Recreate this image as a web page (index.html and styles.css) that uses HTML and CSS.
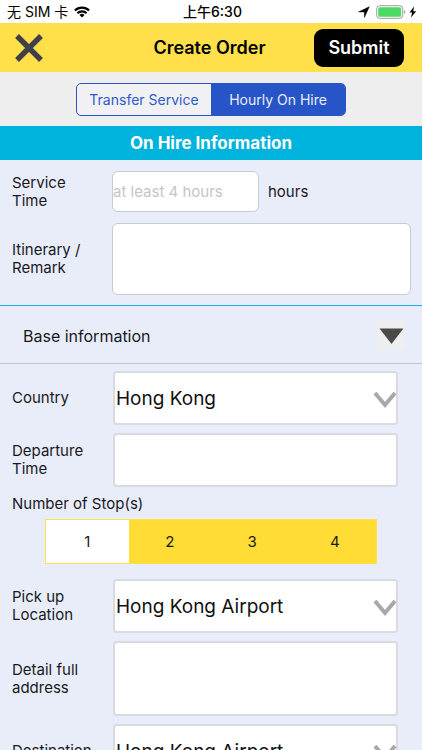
FILE: index.html
```html
<!DOCTYPE html>
<html lang="en">
<head>
<meta charset="utf-8">
<meta name="viewport" content="width=device-width, initial-scale=1">
<title>Create Order</title>
<link rel="stylesheet" href="styles.css">
</head>
<body>
<form class="app">
  <div class="status">
    <div class="status-side">
      <span>无 SIM 卡</span>
      <svg width="16" height="12" viewBox="0 0 16 12" aria-hidden="true">
        <g fill="none" stroke="#000" stroke-width="2.200">
          <path d="M.9 4.6a10 10 0 0 1 14.2 0"/>
          <path d="M3.4 7.2a6.5 6.5 0 0 1 9.2 0"/>
        </g>
        <path d="M8 11.6 5.5 9.1a3.5 3.5 0 0 1 5 0z"/>
      </svg>
    </div>
    <span class="clock">上午6:30</span>
    <div class="status-side status-right">
      <svg width="12" height="12" viewBox="0 0 12 12" aria-hidden="true"><path d="M11.3.7 6.400 11.400V5.900H.600z" stroke="#000" stroke-width=".500"/></svg>
      <svg width="42" height="14" viewBox="0 0 42 14" aria-hidden="true">
        <rect x=".7" y=".7" width="26" height="12.6" rx="3" fill="#fff" stroke="#9a9a9a"/>
        <rect x="2.2" y="2.2" width="23" height="9.6" rx="1.5" fill="#4cd964"/>
        <path d="M28 5v4q1.300-.5 1.300-2T28 5z" fill="#9a9a9a"/>
        <path d="M38 1.500 33.500 7.600h2.600L35 12.500l5.200-6.300h-2.900z"/>
      </svg>
    </div>
  </div>

  <header class="header">
    <button class="close" type="button" aria-label="Close">
      <svg width="28" height="28" viewBox="0 0 28 28" aria-hidden="true"><path d="M2 2 26 26M26 2 2 26" stroke="#413f4a" stroke-width="5.400"/></svg>
    </button>
    <h1 class="title">Create Order</h1>
    <button class="submit" type="submit">Submit</button>
  </header>

  <nav class="tabs">
    <div class="segment">
      <button class="tab" type="button">Transfer Service</button>
      <button class="tab active" type="button">Hourly On Hire</button>
    </div>
  </nav>

  <main class="content">
    <h2 class="banner">On Hire Information</h2>
    <section class="hire">
      <div class="row">
        <label class="label" for="hours">Service Time</label>
        <input class="box hours" id="hours" type="text" placeholder="at least 4 hours">
        <span class="unit">hours</span>
      </div>
      <div class="row">
        <label class="label" for="remark">Itinerary / Remark</label>
        <textarea class="box remark" id="remark"></textarea>
      </div>
    </section>

    <button class="collapse" type="button">
      <span>Base information</span>
      <svg width="28" height="28" viewBox="0 0 28 28" aria-hidden="true"><path fill="#eee" d="M0 0h28v28H0z"/><path d="M2.500 7.500h24L14.500 23z" fill="#4a4a4a"/></svg>
    </button>

    <section class="base">
      <div class="row">
        <label class="label" for="country">Country</label>
        <div class="picker">
          <select class="field" id="country"><option>Hong Kong</option></select>
          <svg class="chevron" width="24" height="18" viewBox="0 0 24 18" aria-hidden="true"><path d="M2 2 12 14 22 2" fill="none" stroke="#a8a8a8" stroke-width="4"/></svg>
        </div>
      </div>
      <div class="row">
        <label class="label" for="departure">Departure Time</label>
        <input class="field" id="departure" type="text">
      </div>
      <fieldset class="stops">
        <legend class="legend">Number of Stop(s)</legend>
        <div class="options">
          <label class="option"><input type="radio" name="stops" checked><span>1</span></label>
          <label class="option"><input type="radio" name="stops"><span>2</span></label>
          <label class="option"><input type="radio" name="stops"><span>3</span></label>
          <label class="option"><input type="radio" name="stops"><span>4</span></label>
        </div>
      </fieldset>
      <div class="row">
        <label class="label" for="pickup">Pick up Location</label>
        <div class="picker">
          <select class="field" id="pickup"><option>Hong Kong Airport</option></select>
          <svg class="chevron" width="24" height="18" viewBox="0 0 24 18" aria-hidden="true"><path d="M2 2 12 14 22 2" fill="none" stroke="#a8a8a8" stroke-width="4"/></svg>
        </div>
      </div>
      <div class="row">
        <label class="label" for="address">Detail full address</label>
        <textarea class="field tall" id="address"></textarea>
      </div>
      <div class="row">
        <label class="label" for="destination">Destination</label>
        <div class="picker">
          <select class="field" id="destination"><option>Hong Kong Airport</option></select>
          <svg class="chevron" width="24" height="18" viewBox="0 0 24 18" aria-hidden="true"><path d="M2 2 12 14 22 2" fill="none" stroke="#a8a8a8" stroke-width="4"/></svg>
        </div>
      </div>
    </section>
  </main>
</form>
</body>
</html>
```

FILE: styles.css
```css
* { box-sizing: border-box; }

body {
  margin: 0;
  font-family: Inter, "Noto Sans CJK SC", sans-serif;
  font-size: 15px;
  color: #18191f;
}

button, input, select, textarea {
  margin: 0;
  font: inherit;
  color: inherit;
}

button { border: 0; padding: 0; background: none; }
svg { display: block; flex: none; }

.app {
  display: flex;
  flex-direction: column;
  height: 100vh;
  overflow: hidden;
  background: #e9edf9;
}

.status {
  display: grid;
  grid-template-columns: 1fr auto 1fr;
  align-items: center;
  flex: none;
  height: 23px;
  padding: 0 4px 0 7px;
  background: #fff;
  font-size: 14px;
  line-height: 23px;
  color: #000;
}

.status-side { display: flex; align-items: center; gap: 6px; }
.status-right { justify-content: flex-end; }
.clock { font-weight: 500; }

.header {
  display: grid;
  grid-template-columns: 1fr auto 1fr;
  align-items: center;
  flex: none;
  height: 49px;
  padding: 0 18px 0 15px;
  background: #ffe04a;
  color: #000;
}

.close { justify-self: start; }
.title { margin: 0; font-size: 18px; font-weight: 600; }

.submit {
  justify-self: end;
  width: 90px;
  height: 38px;
  border-radius: 9px;
  background: #000;
  color: #fff;
  font-size: 18px;
  font-weight: 600;
}

.tabs {
  display: flex;
  justify-content: center;
  align-items: center;
  flex: none;
  height: 54px;
  background: #eee;
}

.segment {
  display: flex;
  width: 64%;
  height: 33px;
  overflow: hidden;
  border: 1px solid #2755c8;
  border-radius: 5px;
  background: #f1f1f4;
}

.tab { flex: 1; font-size: 14px; color: #2f5bc8; white-space: nowrap; }
.tab.active { background: #2755c8; color: #e9edf9; }

.content { flex: 1; min-height: 0; overflow: hidden; }

.banner {
  margin: 0;
  background: #00b3dd;
  color: #fff;
  font-size: 17px;
  font-weight: 700;
  line-height: 34px;
  text-align: center;
}

.hire {
  display: grid;
  grid-template-columns: minmax(0, 1fr);
  gap: 11px;
  padding: 11px 11px 10px 12px;
  border-bottom: 1px solid #1eb0dc;
}

.row { display: flex; align-items: center; }
.label { flex: none; width: 100px; padding-right: 20px; line-height: 18px; }

.box {
  flex: 1;
  min-width: 0;
  height: 41px;
  padding: 0;
  border: 1px solid #c9cace;
  border-radius: 6px;
  background: #fff;
  resize: none;
}

.hours { flex: 0 1 147px; }
.remark { height: 72px; }
.hours::placeholder { color: #c4c5c9; opacity: 1; }
.unit { margin-left: 9px; }

.collapse {
  display: flex;
  justify-content: space-between;
  align-items: center;
  width: 100%;
  height: 58px;
  padding: 3px 17px 0 23px;
  border-bottom: 1px solid #bfc2ce;
  font-size: 16px;
}

.collapse svg { margin-bottom: 3px; }

.base {
  display: grid;
  grid-template-columns: minmax(0, 1fr);
  gap: 8px;
  padding: 7px 24px 8px 12px;
}

.base .label { width: 101px; }
.picker { position: relative; display: flex; flex: 1; min-width: 0; }

.field {
  flex: 1;
  min-width: 0;
  height: 54px;
  padding: 0 0 0 1px;
  border: 2px solid #d9dbe1;
  border-radius: 4px;
  background: #fff;
  appearance: none;
  resize: none;
  font-size: 19px;
  color: #111;
}

.tall { height: 75px; }

.chevron {
  position: absolute;
  top: 20px;
  right: 1px;
  pointer-events: none;
}

.stops { min-width: 0; margin: 0; padding: 0 21px 7px 33px; border: 0; }
.legend { margin-left: -33px; padding: 0 0 6px; line-height: 18px; }

.options {
  display: flex;
  border: 1px solid #ffe04a;
  background: #ffdd35;
}

.option { position: relative; flex: 1; }
.option input { position: absolute; margin: 0; opacity: 0; }
.option span { display: block; line-height: 43px; text-align: center; }
.option input:checked + span { background: #fff; }
```
